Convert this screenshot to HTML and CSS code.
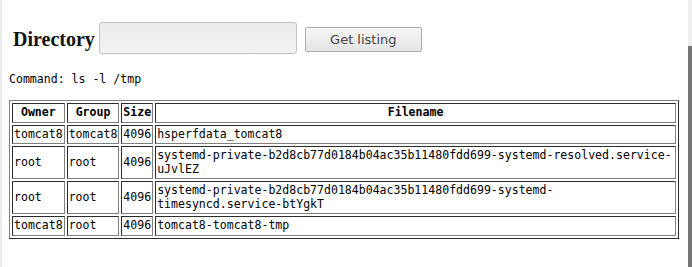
FILE: index.html
```html
<!DOCTYPE html>
<html>
<head>
<meta charset="utf-8">
<link rel="stylesheet" href="styles.css">
</head>
<body>
<div class="edge"></div>
<main class="main">
  <form class="dirrow">
    <label class="dirlabel" for="dir">Directory</label>
    <input class="dirinput" id="dir" type="text">
    <button class="getbtn" type="button">Get listing</button>
  </form>
  <p class="command">Command: ls -l /tmp</p>
  <table class="listing">
    <thead>
      <tr><th>Owner</th><th>Group</th><th>Size</th><th>Filename</th></tr>
    </thead>
    <tbody>
      <tr><td>tomcat8</td><td>tomcat8</td><td>4096</td><td>hsperfdata_tomcat8</td></tr>
      <tr><td>root</td><td>root</td><td>4096</td><td>systemd-private-b2d8cb77d0184b04ac35b11480fdd699-systemd-resolved.service-uJvlEZ</td></tr>
      <tr><td>root</td><td>root</td><td>4096</td><td>systemd-private-b2d8cb77d0184b04ac35b11480fdd699-systemd-timesyncd.service-btYgkT</td></tr>
      <tr><td>tomcat8</td><td>root</td><td>4096</td><td>tomcat8-tomcat8-tmp</td></tr>
    </tbody>
  </table>
</main>
<div class="scrollbar">
  <div class="track"></div>
  <div class="thumb"></div>
</div>
</body>
</html>
```
FILE: styles.css
```css
html, body {
  margin: 0;
  padding: 0;
  height: 100%;
  background: #ffffff;
}
body {
  display: flex;
  overflow: hidden;
}
.edge {
  width: 2px;
  background: #ebebeb;
  flex: none;
}
.main {
  flex: 1;
  min-width: 0;
  padding: 22px 9px 0 7px;
}
.scrollbar {
  width: 4px;
  flex: none;
  display: flex;
  flex-direction: column;
}
.track {
  height: 46px;
  background: #eeeeee;
}
.thumb {
  flex: 1;
  background: #767676;
}
.dirrow {
  display: flex;
  align-items: center;
  margin: 0;
  padding-left: 4px;
}
.dirlabel {
  font-family: "Liberation Serif", serif;
  font-weight: bold;
  font-size: 20px;
  color: #111;
  padding-top: 3px;
  margin-right: 4px;
}
.dirinput {
  box-sizing: border-box;
  width: 198px;
  height: 32px;
  margin: 0;
  border: 1px solid #c2c2c2;
  border-radius: 3px;
  background: linear-gradient(#ececec, #f2f2f2);
  padding: 0 4px;
}
.getbtn {
  box-sizing: border-box;
  width: 117px;
  height: 25px;
  margin: 2px 0 0 8px;
  border: 1px solid #ababab;
  border-radius: 2px;
  background: linear-gradient(#f7f7f7, #e4e4e4);
  font-family: "DejaVu Sans", sans-serif;
  font-size: 13px;
  color: #444;
  padding: 0;
}
.command {
  font-family: "DejaVu Sans Mono", monospace;
  font-size: 11.55px;
  line-height: 14px;
  margin: 18px 0 14px 0;
  color: #000;
}
.listing {
  border: 1px outset gray;
  border-spacing: 2px;
  width: 670px;
  font-family: "DejaVu Sans Mono", monospace;
  font-size: 11.55px;
  line-height: 13.5px;
  color: #000;
}
.listing th,
.listing td {
  border: 1px inset gray;
  padding: 2px 1px;
}
.listing th {
  font-weight: bold;
  text-align: center;
}
.listing td {
  text-align: left;
}
```
